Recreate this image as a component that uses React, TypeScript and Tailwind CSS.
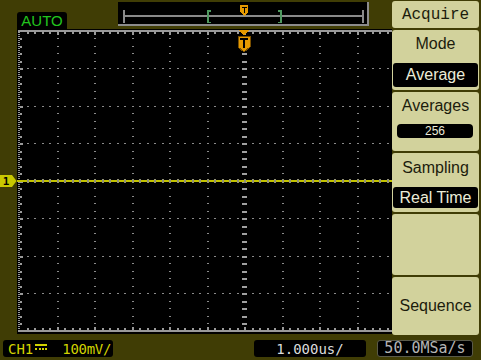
import React from "react";

const DIV = 37.5;

// Screen graticule: 12 x 8 divisions, the right part is covered by the menu
function Graticule() {
  const W = 375;
  const x0 = 2;
  const y0 = 1.5;
  const cx = 227;
  const cy = 151.5;
  const dots: React.ReactNode[] = [];

  for (let k = 1; k <= 9; k++) {
    if (k === 6) continue;
    const x = Math.round(x0 + k * DIV);
    for (let m = 1; m < 40; m++) {
      const y = Math.round(y0 + m * 7.5);
      dots.push(<rect key={`v${k}-${m}`} x={x} y={y} width={2} height={1} fill="#8a8a8a" />);
    }
  }
  for (let j = 1; j <= 7; j++) {
    if (j === 4) continue;
    const y = Math.round(y0 + j * DIV);
    for (let m = 1; m < 50; m++) {
      const x = Math.round(x0 + m * 7.5);
      if (x > W) break;
      dots.push(<rect key={`h${j}-${m}`} x={x} y={y} width={2} height={1} fill="#8a8a8a" />);
    }
  }
  // centre lines with short dashes
  for (let m = 1; m < 40; m++) {
    const y = Math.round(y0 + m * 7.5);
    dots.push(<rect key={`cv${m}`} x={cx - 2} y={y} width={5} height={1.5} fill="#a0a0a0" />);
  }
  const ticks: React.ReactNode[] = [];
  for (let m = 1; m < 50; m++) {
    const x = Math.round(x0 + m * 7.5);
    if (x > W) break;
    const major = m % 5 === 0;
    ticks.push(<rect key={`tt${m}`} x={x} y={3} width={1.5} height={major ? 3 : 2} fill="#9a9a9a" />);
    ticks.push(<rect key={`tb${m}`} x={x} y={major ? 298 : 299} width={1.5} height={major ? 3 : 2} fill="#9a9a9a" />);
  }
  for (let m = 1; m < 40; m++) {
    const y = Math.round(y0 + m * 7.5);
    ticks.push(<rect key={`tl${m}`} x={3} y={y} width={m % 5 === 0 ? 3 : 2} height={1.5} fill="#9a9a9a" />);
  }

  return (
    <svg width={375} height={305} viewBox="0 0 375 305" shapeRendering="crispEdges" className="block">
      {dots}
      {/* border */}
      <rect x={1} y={1} width={374} height={2} fill="#9a9a9a" />
      <rect x={1} y={301} width={374} height={2} fill="#9a9a9a" />
      <line x1={2} y1={1} x2={2} y2={303} stroke="#9a9a9a" strokeWidth={2} strokeDasharray="1 1" />
      {ticks}
      {/* channel 1 trace */}
      <rect x={0} y={151} width={375} height={2} fill="#c2c200" />
      {Array.from({ length: 49 }, (_, m) => {
        const x = Math.round(x0 + (m + 1) * 7.5);
        return <rect key={`o${m}`} x={x} y={cy - 2} width={1.5} height={4} fill="#909078" />;
      })}
      {/* trigger position marker */}
      <path d="M221 1 H233 L227 6 Z" fill="#e69a00" />
      <path d="M221 7 H233 V18 L227 23 L221 18 Z" fill="#e69a00" stroke="#7a4f00" strokeWidth={1} />
      <rect x={223} y={9} width={8} height={2} fill="#000" />
      <rect x={226} y={11} width={2} height={8} fill="#000" />
    </svg>
  );
}

function TriggerBar() {
  return (
    <div className="mt-[2px] ml-[51px] w-[251px] h-[24px] bg-black border-r-2 border-b-2 border-[#8c8c8c]">
      <svg width={249} height={22} viewBox="0 0 249 22" shapeRendering="crispEdges" className="block">
        <rect x={5} y={13} width={241} height={2} fill="#8a8a8a" />
        <rect x={5} y={8} width={2} height={13} fill="#8a8a8a" />
        <rect x={244} y={8} width={2} height={13} fill="#8a8a8a" />
        {/* memory window brackets */}
        <rect x={89} y={8} width={2} height={13} fill="#4f9a60" />
        <rect x={89} y={8} width={4} height={1.5} fill="#4f9a60" />
        <rect x={89} y={19.5} width={4} height={1.5} fill="#4f9a60" />
        <rect x={162} y={8} width={2} height={13} fill="#4f9a60" />
        <rect x={160} y={8} width={4} height={1.5} fill="#4f9a60" />
        <rect x={160} y={19.5} width={4} height={1.5} fill="#4f9a60" />
        <path d="M122 3 H130 V10 L126 14 L122 10 Z" fill="#e69a00" />
        <rect x={123.5} y={4.5} width={5} height={1.5} fill="#000" />
        <rect x={125.5} y={6} width={1.5} height={5} fill="#000" />
      </svg>
    </div>
  );
}

function DcSymbol() {
  return (
    <svg width={12} height={6} viewBox="0 0 12 6" shapeRendering="crispEdges" className="inline-block">
      <rect x={0} y={0} width={12} height={1.5} fill="#d2d200" />
      <rect x={0} y={4} width={2} height={1.5} fill="#d2d200" />
      <rect x={3.5} y={4} width={2} height={1.5} fill="#d2d200" />
      <rect x={7} y={4} width={2} height={1.5} fill="#d2d200" />
      <rect x={10} y={4} width={2} height={1.5} fill="#d2d200" />
    </svg>
  );
}

export default function App() {
  const sans = "font-['Liberation_Sans',Arial,sans-serif]";
  const mono = "font-['DejaVu_Sans_Mono',monospace]";

  return (
    <div className="w-[481px] h-[360px] bg-[#403d05] flex flex-col overflow-hidden">
      <div className="flex h-[336px]">
        {/* left: status + screen */}
        <div className="w-[392px] flex flex-col">
          <div className="h-[29px] flex items-start">
            <div
              className={`self-end ml-[17px] w-[50px] h-[17px] bg-black rounded-t-[3px] flex items-center justify-center text-[15px] leading-none text-[#22c41e] ${sans}`}
            >
              AUTO
            </div>
            <TriggerBar />
          </div>
          <div className="flex h-[305px]">
            <div className="w-[17px] pt-[146px]">
              <svg width={17} height={12} viewBox="0 0 17 12" className="block">
                <path d="M0 0 H12 L16.5 6 L12 12 H0 Z" fill="#c8c800" />
                <text x={6} y={10} textAnchor="middle" fontSize={11} fontWeight={700} fontFamily="DejaVu Sans Mono, monospace" fill="#000">
                  1
                </text>
              </svg>
            </div>
            <div className="w-[375px] h-[305px] bg-black">
              <Graticule />
            </div>
          </div>
        </div>

        {/* right: Acquire menu */}
        <div className={`w-[87px] pt-[1px] flex flex-col gap-[2px] text-[16px] text-[#1c1c0c] ${sans}`}>
          <div className="h-[27px] bg-[#d2d29c] rounded-[3px] flex items-center justify-center font-['Liberation_Mono',monospace]">
            Acquire
          </div>
          <div className="h-[60px] bg-[#d2d29c] rounded-[3px] flex flex-col">
            <div className="h-[28px] flex items-center justify-center">Mode</div>
            <div className="mt-[5px] mx-[1px] h-[24px] bg-black rounded-[3px] flex items-center justify-center text-[#ececd8]">
              Average
            </div>
          </div>
          <div className="h-[59px] bg-[#d2d29c] rounded-[3px] flex flex-col">
            <div className="h-[28px] flex items-center justify-center">Averages</div>
            <div className="mt-[4px] ml-[5px] mr-[6px] h-[14px] bg-black rounded-[4px] flex items-center justify-center text-[12px] leading-none text-[#ececd8]">
              256
            </div>
          </div>
          <div className="h-[59px] bg-[#d2d29c] rounded-[3px] flex flex-col">
            <div className="h-[30px] flex items-center justify-center">Sampling</div>
            <div className="mt-[4px] mx-[1px] h-[21px] bg-black rounded-[3px] flex items-center justify-center text-[#ececd8]">
              Real Time
            </div>
          </div>
          <div className="h-[61px] bg-[#d2d29c] rounded-[3px]" />
          <div className="h-[58px] bg-[#d2d29c] rounded-[3px] flex items-center justify-center">Sequence</div>
        </div>
      </div>

      {/* bottom status line */}
      <div className={`h-[24px] pt-[4px] flex items-start text-[14px] leading-none ${mono}`}>
        <div className="ml-[3px] w-[110px] h-[17px] bg-black rounded-[3px] flex items-center pl-[5px] text-[#d2d200]">
          <span>CH1</span>
          <span className="ml-[2px] mb-[3px] flex">
            <DcSymbol />
          </span>
          <span className="ml-[15px] tracking-[-0.3px]">100mV/</span>
        </div>
        <div className="ml-[141px] w-[112px] h-[17px] bg-black rounded-[3px] flex items-center justify-center text-[#dcdcdc]">
          1.000us/
        </div>
        <div className="ml-[11px] w-[96px] h-[17px] bg-black rounded-[3px] border border-[#5a5a4a] flex items-center justify-center text-[15px] text-[#b4b4b4]">
          50.0MSa/s
        </div>
      </div>
    </div>
  );
}
